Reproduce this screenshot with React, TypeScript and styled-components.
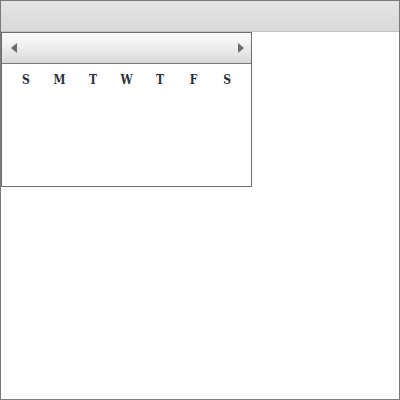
import styled, { createGlobalStyle } from 'styled-components';

const Global = createGlobalStyle`
  html, body {
    margin: 0;
    padding: 0;
    background: #ffffff;
  }
`;

const Frame = styled.div`
  width: 400px;
  height: 400px;
  box-sizing: border-box;
  border: 1px solid #7a7a7a;
  display: flex;
  flex-direction: column;
  background: #ffffff;
`;

const Toolbar = styled.div`
  height: 30px;
  flex: none;
  background: linear-gradient(#e4e4e4, #d9d9d9);
  border-bottom: 1px solid #c4c4c4;
`;

const Popup = styled.div`
  width: 251px;
  height: 155px;
  box-sizing: border-box;
  border: 1px solid #6e6e6e;
  display: flex;
  flex-direction: column;
  background: #ffffff;
`;

const Header = styled.div`
  height: 30px;
  flex: none;
  display: flex;
  align-items: center;
  justify-content: space-between;
  padding: 0 7px 0 9px;
  background: linear-gradient(#fdfdfd, #e2e2e2 80%, #d6d6d6);
  border-bottom: 1px solid #7a7a7a;
`;

const Arrow = styled.svg`
  display: block;
  width: 6px;
  height: 10px;
`;

const Days = styled.div`
  display: grid;
  grid-template-columns: repeat(7, 1fr);
  padding: 9px 7px 0 7px;
`;

const DayName = styled.div`
  text-align: center;
  font-family: 'DejaVu Serif', 'Liberation Serif', serif;
  font-stretch: condensed;
  font-weight: bold;
  font-size: 12px;
  line-height: 14px;
  color: #2b303a;
`;

const names = ['S', 'M', 'T', 'W', 'T', 'F', 'S'];

export default function App() {
  return (
    <>
      <Global />
      <Frame>
        <Toolbar />
        <Popup>
          <Header>
            <Arrow viewBox="0 0 6 10">
              <path d="M6 0 L0 5 L6 10 Z" fill="#6b6b6b" />
            </Arrow>
            <Arrow viewBox="0 0 6 10">
              <path d="M0 0 L6 5 L0 10 Z" fill="#6b6b6b" />
            </Arrow>
          </Header>
          <Days>
            {names.map((n, i) => (
              <DayName key={i}>{n}</DayName>
            ))}
          </Days>
        </Popup>
      </Frame>
    </>
  );
}
